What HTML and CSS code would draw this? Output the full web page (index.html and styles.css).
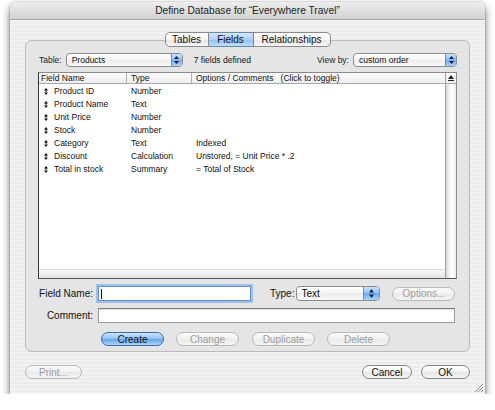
FILE: index.html
```html
<!DOCTYPE html>
<html lang="en">
<head>
  <meta charset="UTF-8">
  <title>Define Database for "Everywhere Travel"</title>
  <link rel="stylesheet" href="styles.css">
</head>
<body>
  <div class="window">
    <div class="titlebar">Define Database for “Everywhere Travel”</div>

    <div class="content">
      <!-- tab switcher sits over the group box border -->
      <div class="tabs">
        <span class="tab tab-tables">Tables</span>
        <span class="tab tab-fields selected">Fields</span>
        <span class="tab tab-rel">Relationships</span>
      </div>

      <div class="tabbox">
        <div class="toolbar">
          <span class="small-label">Table:</span>
          <div class="popup popup-table">
            <span class="popup-text">Products</span>
            <span class="cap"><svg width="5" height="8" viewBox="0 0 5 8"><path d="M2.5 0 L5 3 H0 Z M2.5 8 L5 5 H0 Z" fill="#10204a"/></svg></span>
          </div>
          <span class="count">7 fields defined</span>
          <span class="small-label view-label">View by:</span>
          <div class="popup popup-view">
            <span class="popup-text">custom order</span>
            <span class="cap"><svg width="5" height="8" viewBox="0 0 5 8"><path d="M2.5 0 L5 3 H0 Z M2.5 8 L5 5 H0 Z" fill="#10204a"/></svg></span>
          </div>
        </div>

        <div class="list">
          <div class="list-main">
            <div class="list-head">
              <div class="col c-name">Field Name</div>
              <div class="col c-type">Type</div>
              <div class="col c-opts">Options / Comments   (Click to toggle)</div>
            </div>
            <div class="rows">
              <div class="row"><div class="col c-name"><svg class="grip" width="4" height="7" viewBox="0 0 4 7"><path d="M2 0 L4 2.5 H0 Z M2 7 L4 4.5 H0 Z M1.5 2 H2.5 V5 H1.5 Z" fill="#111"/></svg>Product ID</div><div class="col c-type">Number</div><div class="col c-opts"></div></div>
              <div class="row"><div class="col c-name"><svg class="grip" width="4" height="7" viewBox="0 0 4 7"><path d="M2 0 L4 2.5 H0 Z M2 7 L4 4.5 H0 Z M1.5 2 H2.5 V5 H1.5 Z" fill="#111"/></svg>Product Name</div><div class="col c-type">Text</div><div class="col c-opts"></div></div>
              <div class="row"><div class="col c-name"><svg class="grip" width="4" height="7" viewBox="0 0 4 7"><path d="M2 0 L4 2.5 H0 Z M2 7 L4 4.5 H0 Z M1.5 2 H2.5 V5 H1.5 Z" fill="#111"/></svg>Unit Price</div><div class="col c-type">Number</div><div class="col c-opts"></div></div>
              <div class="row"><div class="col c-name"><svg class="grip" width="4" height="7" viewBox="0 0 4 7"><path d="M2 0 L4 2.5 H0 Z M2 7 L4 4.5 H0 Z M1.5 2 H2.5 V5 H1.5 Z" fill="#111"/></svg>Stock</div><div class="col c-type">Number</div><div class="col c-opts"></div></div>
              <div class="row"><div class="col c-name"><svg class="grip" width="4" height="7" viewBox="0 0 4 7"><path d="M2 0 L4 2.5 H0 Z M2 7 L4 4.5 H0 Z M1.5 2 H2.5 V5 H1.5 Z" fill="#111"/></svg>Category</div><div class="col c-type">Text</div><div class="col c-opts">Indexed</div></div>
              <div class="row"><div class="col c-name"><svg class="grip" width="4" height="7" viewBox="0 0 4 7"><path d="M2 0 L4 2.5 H0 Z M2 7 L4 4.5 H0 Z M1.5 2 H2.5 V5 H1.5 Z" fill="#111"/></svg>Discount</div><div class="col c-type">Calculation</div><div class="col c-opts">Unstored, = Unit Price * .2</div></div>
              <div class="row"><div class="col c-name"><svg class="grip" width="4" height="7" viewBox="0 0 4 7"><path d="M2 0 L4 2.5 H0 Z M2 7 L4 4.5 H0 Z M1.5 2 H2.5 V5 H1.5 Z" fill="#111"/></svg>Total in stock</div><div class="col c-type">Summary</div><div class="col c-opts">= Total of Stock</div></div>
            </div>
            <div class="hscroll"></div>
          </div>
          <div class="vscroll">
            <div class="sort-cell"><svg width="6" height="6" viewBox="0 0 6 6"><path d="M3 0 L6 4 H0 Z" fill="#222"/><rect x="0" y="5" width="6" height="1" fill="#222"/></svg></div>
            <div class="track"></div>
          </div>
        </div>

        <div class="form-row">
          <span class="form-label">Field Name:</span>
          <div class="input name-input focused"><span class="caret"></span></div>
          <span class="type-label">Type:</span>
          <div class="popup popup-type">
            <span class="popup-text">Text</span>
            <span class="cap"><svg width="5" height="9" viewBox="0 0 5 9"><path d="M2.5 0 L5 3.5 H0 Z M2.5 9 L5 5.5 H0 Z" fill="#10204a"/></svg></span>
          </div>
          <span class="btn disabled btn-options">Options...</span>
        </div>

        <div class="form-row comment-row">
          <span class="form-label">Comment:</span>
          <div class="input comment-input"></div>
        </div>

        <div class="button-row">
          <span class="btn default">Create</span>
          <span class="btn disabled">Change</span>
          <span class="btn disabled">Duplicate</span>
          <span class="btn disabled">Delete</span>
        </div>
      </div>

      <div class="footer">
        <span class="btn disabled btn-print">Print...</span>
        <span class="btn btn-cancel">Cancel</span>
        <span class="btn btn-ok">OK</span>
      </div>
    </div>

    <svg class="resize-grip" width="9" height="9" viewBox="0 0 9 9">
      <path d="M9 1 L1 9 M9 4 L4 9 M9 7 L7 9" stroke="#8a8a8a" stroke-width="1"/>
    </svg>
  </div>
</body>
</html>
```

FILE: styles.css
```css
* {
  box-sizing: border-box;
}
body {
  margin: 0;
  background: #fff;
  font-family: "Liberation Sans", Arial, sans-serif;
  color: #111;
}
.window {
  position: relative;
  width: 475px;
  height: 392px;
  margin: 2px 0 0 10px;
  border-radius: 5px 5px 0 0;
  background: repeating-linear-gradient(to bottom, #ececec 0, #ececec 2px, #f3f3f3 2px, #f3f3f3 4px);
  box-shadow: 0 5px 9px rgba(0, 0, 0, 0.55), 0 0 2px rgba(0, 0, 0, 0.35);
}
.titlebar {
  height: 18px;
  border-radius: 5px 5px 0 0;
  background: linear-gradient(#eeeeee, #e0e0e0 50%, #d2d2d2);
  border-bottom: 1px solid #a8a8a8;
  font-size: 10.2px;
  line-height: 17px;
  text-align: center;
  color: #222;
}
.content {
  padding: 12px 15px 0 15px;
}

/* segmented tabs */
.tabs {
  position: relative;
  z-index: 1;
  display: flex;
  justify-content: center;
  height: 15px;
}
.tab {
  display: flex;
  align-items: center;
  justify-content: center;
  height: 15px;
  font-size: 10px;
  border: 1px solid #8a8a8a;
  border-left: none;
  background: linear-gradient(#ffffff, #f4f4f4 50%, #e6e6e6 50%, #f6f6f6);
}
.tab-tables {
  width: 44px;
  border-left: 1px solid #8a8a8a;
  border-radius: 5px 0 0 5px;
}
.tab-fields {
  width: 45px;
}
.tab-rel {
  width: 77px;
  border-radius: 0 5px 5px 0;
}
.tab.selected {
  background: linear-gradient(#d4e8fb, #a9d0f5 50%, #8ac0f0 50%, #bde0fb);
  border-color: #6c87a8;
}

/* group box */
.tabbox {
  margin-top: -7px;
  height: 312px;
  border: 1px solid #bababa;
  border-radius: 6px;
  background: #e5e5e5;
  padding: 12px 12px 0 12px;
}
.toolbar {
  display: flex;
  align-items: center;
  height: 14px;
}
.small-label {
  font-size: 8.5px;
  color: #222;
}
.toolbar .small-label:first-child {
  margin-left: 1px;
  margin-right: 4px;
}
.count {
  font-size: 8.5px;
  margin-left: 11px;
}
.view-label {
  margin-left: auto;
  margin-right: 4px;
}

/* popup menus */
.popup {
  display: flex;
  align-items: stretch;
  height: 14px;
  border: 1px solid #8c8c8c;
  border-radius: 4px;
  background: linear-gradient(#ffffff, #f5f5f5 50%, #ececec 50%, #fafafa);
  overflow: hidden;
}
.popup-text {
  flex: 1;
  font-size: 8.5px;
  line-height: 12px;
  padding-left: 5px;
}
.cap {
  width: 11px;
  display: flex;
  align-items: center;
  justify-content: center;
  border-left: 1px solid #6b8fbd;
  background: linear-gradient(#c8e2fb, #8cc0f1 50%, #6aa9ea 50%, #a9d5fb);
}
.popup-table {
  width: 117px;
}
.popup-view {
  width: 104px;
}
.popup-type {
  width: 84px;
  height: 15px;
}
.popup-type .popup-text {
  font-size: 10px;
  line-height: 13px;
  padding-left: 4px;
}
.popup-type .cap {
  width: 16px;
}

/* field list */
.list {
  display: flex;
  height: 207px;
  margin-top: 5px;
  border: 1px solid #8a8a8a;
  border-left-color: #333;
  border-bottom-color: #555;
  background: #fff;
}
.list-main {
  flex: 1;
  display: flex;
  flex-direction: column;
}
.list-head {
  display: flex;
  height: 11px;
  border-bottom: 1px solid #a9a9a9;
  background: linear-gradient(#fbfbfb, #eeeeee);
  font-size: 8.5px;
  line-height: 10px;
}
.list-head .c-name {
  padding-left: 2px;
}
.col {
  white-space: pre;
  overflow: hidden;
}
.c-name {
  width: 88px;
  border-right: 1px solid #b0b0b0;
  display: flex;
  align-items: center;
}
.c-type {
  width: 65px;
  padding-left: 4px;
  border-right: 1px solid #b0b0b0;
}
.c-opts {
  flex: 1;
  padding-left: 4px;
}
.rows {
  flex: 1;
  padding-top: 1px;
}
.row {
  display: flex;
  height: 13px;
  font-size: 8.5px;
  line-height: 13px;
}
.row .col {
  border-right: none;
}
.row .c-name {
  padding-left: 5px;
}
.grip {
  margin-right: 6px;
}
.hscroll {
  height: 9px;
  border-top: 1px solid #dedede;
  background: linear-gradient(#f8f8f8, #ececec 60%, #e2e2e2);
}
.vscroll {
  width: 11px;
  display: flex;
  flex-direction: column;
  border-left: 1px solid #a0a0a0;
}
.sort-cell {
  height: 11px;
  display: flex;
  align-items: center;
  justify-content: center;
  border-bottom: 1px solid #a9a9a9;
  background: linear-gradient(#fbfbfb, #eeeeee);
}
.track {
  flex: 1;
  background: linear-gradient(to right, #d8d8d8, #f4f4f4 35%, #ffffff 65%, #ebebeb);
}

/* form rows */
.form-row {
  display: flex;
  align-items: center;
  height: 15px;
  margin-top: 7px;
}
.form-label {
  width: 55px;
  text-align: right;
  font-size: 10px;
  margin-right: 5px;
}
.input {
  height: 15px;
  background: #fff;
  border: 1px solid #9a9a9a;
  border-top-color: #7a7a7a;
  box-shadow: inset 0 1px 1px rgba(0, 0, 0, 0.12);
  display: flex;
  align-items: center;
}
.name-input {
  width: 153px;
}
.focused {
  border-color: #5d8fcf;
  box-shadow: 0 0 0 2px #9ec0ea;
}
.caret {
  width: 1px;
  height: 10px;
  margin-left: 2px;
  background: #111;
}
.type-label {
  font-size: 10px;
  margin-left: 19px;
  margin-right: 2px;
}
.comment-input {
  width: 357px;
}

/* aqua buttons */
.btn {
  display: inline-flex;
  align-items: center;
  justify-content: center;
  width: 63px;
  height: 14px;
  border-radius: 8px;
  font-size: 10px;
  border: 1px solid #858585;
  background: linear-gradient(#ffffff, #f3f3f3 50%, #e4e4e4 50%, #f7f7f7);
  color: #111;
}
.btn.disabled {
  border-color: #b8b8b8;
  color: #9c9c9c;
  background: linear-gradient(#fbfbfb, #f1f1f1 50%, #e9e9e9 50%, #f5f5f5);
}
.btn.default {
  border-color: #3f6b9f;
  background: linear-gradient(#cde5fb, #8cc0f1 50%, #5fa3e8 50%, #a8d6fc);
}
.btn-options {
  margin-left: 12px;
}
.button-row {
  display: flex;
  gap: 12px;
  margin-top: 9px;
  padding-left: 63px;
}
.button-row .btn:nth-child(2) {
  margin-right: 1px;
}
.footer {
  display: flex;
  margin-top: 13px;
  gap: 9px;
}
.btn-print {
  width: 57px;
  margin-right: auto;
}
.btn-cancel {
  width: 50px;
}
.btn-ok {
  width: 49px;
}
.resize-grip {
  position: absolute;
  right: 2px;
  bottom: 2px;
}
```
